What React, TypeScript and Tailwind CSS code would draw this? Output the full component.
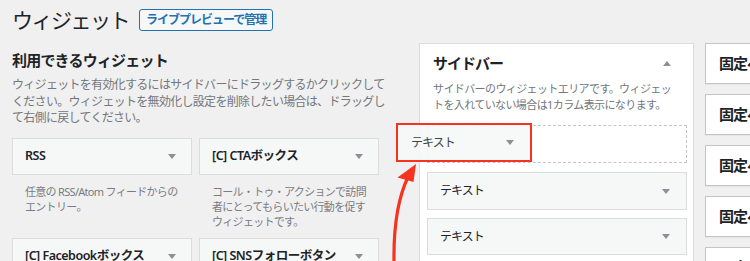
import React from 'react';

const font = "font-['Noto_Sans','Noto_Sans_CJK_JP',sans-serif]";

function Caret({ up = false }: { up?: boolean }) {
  return (
    <svg width="8" height="5" viewBox="0 0 8 5" className="shrink-0">
      {up ? <polygon points="0,5 8,5 4,0" fill="#8c8f94" /> : <polygon points="0,0 8,0 4,5" fill="#8c8f94" />}
    </svg>
  );
}

function WidgetBox({ title }: { title: string }) {
  return (
    <div className="h-[37px] flex items-center justify-between pl-[12px] pr-[15px] bg-[#f6f7f7] border border-[#dcdcde]">
      <span className="text-[12.5px] font-semibold text-[#1d2327] tracking-[-0.5px] whitespace-nowrap">{title}</span>
      <Caret />
    </div>
  );
}

const available = [
  { title: 'RSS', desc: ['任意の RSS/Atom フィードからの', 'エントリー。'] },
  { title: '[C] CTAボックス', desc: ['コール・トゥ・アクションで訪問', '者にとってもらいたい行動を促す', 'ウィジェットです。'] },
  { title: '[C] Facebookボックス', desc: [] },
  { title: '[C] SNSフォローボタン', desc: [] },
];

export default function App() {
  return (
    <div className={`relative w-[750px] h-[261px] overflow-hidden bg-[#f0f0f1] ${font}`}>
      {/* header */}
      <div className="flex items-center pl-3 pt-[8px] h-[32px]">
        <h1 className="text-[21px] leading-[24px] tracking-[-1.5px] text-[#1d2327] whitespace-nowrap">ウィジェット</h1>
        <button className="ml-[10px] h-[22px] px-[6px] border border-[#2271b1] rounded-[3px] bg-[#f6f7f7] text-[12px] font-semibold tracking-[-1px] text-[#2271b1] whitespace-nowrap">
          ライブプレビューで管理
        </button>
      </div>

      <div className="flex mt-[11px]">
        {/* available widgets */}
        <div className="ml-3 w-[368px] shrink-0 pt-[7px]">
          <h2 className="text-[15px] leading-[20px] font-bold tracking-[-0.8px] text-[#1d2327]">利用できるウィジェット</h2>
          <p className="mt-[7px] text-[12px] leading-[16.5px] tracking-[-0.7px] text-[#72777c] whitespace-nowrap">
            ウィジェットを有効化するにはサイドバーにドラッグするかクリックして
            <br />
            ください。ウィジェットを無効化し設定を削除したい場合は、ドラッグし
            <br />
            て右側に戻してください。
          </p>
          <div className="mt-[11px] grid grid-cols-[180px_180px] gap-x-[7px]">
            {available.map((w) => (
              <div key={w.title} className="flex flex-col">
                <WidgetBox title={w.title} />
                {w.desc.length > 0 && (
                  <p className="mt-[9px] mb-[9px] px-[13px] text-[11px] leading-[15px] tracking-[-0.7px] text-[#787c82] whitespace-nowrap">
                    {w.desc.map((l, i) => (
                      <span key={i} className="block">{l}</span>
                    ))}
                  </p>
                )}
              </div>
            ))}
          </div>
        </div>

        {/* sidebar area */}
        <div className="ml-[39px] w-[275px] h-[230px] shrink-0 bg-white border border-[#dcdcde]">
          <div className="flex items-center justify-between pl-[13px] pr-[22px] pt-[9px]">
            <span className="text-[15px] leading-[20px] font-semibold tracking-[-1px] text-[#1d2327]">サイドバー</span>
            <Caret up />
          </div>
          <p className="mt-[8px] pl-[13px] text-[11px] leading-[16px] tracking-[-0.6px] text-[#72777c] whitespace-nowrap">
            サイドバーのウィジェットエリアです。ウィジェッ
            <br />
            トを入れていない場合は1カラム表示になります。
          </p>
          <div className="mt-[12px] ml-[7px] mr-[6px] h-[38px] border border-dashed border-[#c3c4c7]" />
          <div className="mt-[9px] ml-[7px] mr-[6px] h-[38px] flex items-center justify-between pl-[12px] pr-[16px] bg-[#f6f7f7] border border-[#dcdcde]">
            <span className="text-[12px] tracking-[-1px] text-[#1d2327]">テキスト</span>
            <Caret />
          </div>
          <div className="mt-[8px] ml-[7px] mr-[6px] h-[37px] flex items-center justify-between pl-[12px] pr-[16px] bg-[#f6f7f7] border border-[#dcdcde]">
            <span className="text-[12px] tracking-[-1px] text-[#1d2327]">テキスト</span>
            <Caret />
          </div>
        </div>

        {/* other areas */}
        <div className="ml-[11px] w-[275px] shrink-0 flex flex-col gap-[10px]">
          {[0, 1, 2, 3, 4].map((i) => (
            <div key={i} className="h-[41px] flex items-center pl-[13px] bg-white border border-[#c3c4c7] shadow-[0_1px_1px_rgba(0,0,0,0.04)]">
              <span className="text-[15px] font-semibold tracking-[-1px] text-[#1d2327] whitespace-nowrap">固定ページ用サイドバー</span>
            </div>
          ))}
        </div>
      </div>

      {/* dragged widget */}
      <div className="absolute left-[396px] top-[123px] w-[136px] h-[39px] border-2 border-[#f5341f] bg-[#f6f7f7]/90 flex items-center justify-between pl-[13px] pr-[16px]">
        <span className="text-[12px] tracking-[-1px] text-[#3c434a]">テキスト</span>
        <Caret />
      </div>

      {/* red arrow */}
      <svg className="absolute left-0 top-0 pointer-events-none" width="750" height="261" viewBox="0 0 750 261">
        <path d="M394 262 C393.5 228 397 200 408 177" stroke="#f5341f" strokeWidth="3.2" fill="none" strokeLinecap="round" />
        <polygon points="416,164 397.5,177.5 413.5,182" fill="#f5341f" />
      </svg>
    </div>
  );
}
